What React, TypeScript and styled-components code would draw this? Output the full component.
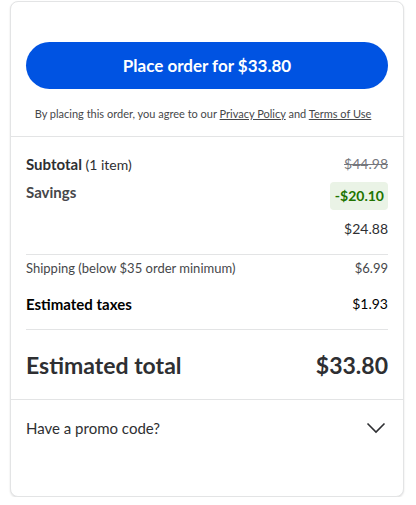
import React from 'react';
import styled, { createGlobalStyle } from 'styled-components';

const GlobalStyle = createGlobalStyle`
  body {
    margin: 0;
    background: #fff;
    font-family: Lato, "Noto Sans", sans-serif;
    color: #2e2f32;
  }
`;

const Page = styled.div`
  padding: 1px 12px 0 10px;
`;

const Card = styled.section`
  box-sizing: border-box;
  width: 394px;
  height: 496px;
  border: 1px solid #e3e4e5;
  border-radius: 8px;
  box-shadow: 0 1px 2px rgba(0, 0, 0, 0.12);
  background: #fff;
  display: flex;
  flex-direction: column;
`;

const CheckoutArea = styled.div`
  padding: 40px 15px 0;
  border-bottom: 1px solid #e3e4e5;
  display: flex;
  flex-direction: column;
  align-items: center;
`;

const PlaceOrderButton = styled.button`
  width: 100%;
  height: 47px;
  border: none;
  border-radius: 24px;
  background: #0053e2;
  color: #fff;
  font-family: Lato, "Noto Sans", sans-serif;
  font-weight: 700;
  font-size: 17px;
  cursor: pointer;
`;

const Legal = styled.p`
  margin: 17px 8px 14px 0;
  font-size: 11px;
  line-height: 16px;
  color: #46474a;

  a {
    color: #46474a;
    text-decoration: underline;
  }
`;

const Summary = styled.div`
  padding: 17px 15px 0;
`;

const Row = styled.div<{ $gap?: number }>`
  display: flex;
  justify-content: space-between;
  align-items: flex-start;
  margin-bottom: ${(p) => p.$gap ?? 0}px;
`;

const Label = styled.span<{ $weight?: number; $size?: number; $color?: string }>`
  font-size: ${(p) => p.$size ?? 15}px;
  line-height: 20px;
  font-weight: ${(p) => p.$weight ?? 400};
  color: ${(p) => p.$color ?? '#2e2f32'};

  small {
    font-size: 14px;
    font-weight: 400;
  }
`;

const Amount = styled.span<{ $size?: number; $color?: string; $struck?: boolean }>`
  font-size: ${(p) => p.$size ?? 14}px;
  line-height: 20px;
  color: ${(p) => p.$color ?? '#2e2f32'};
  text-decoration: ${(p) => (p.$struck ? 'line-through' : 'none')};
`;

const SavingsBadge = styled.span`
  background: #eaf3e6;
  color: #217300;
  font-weight: 700;
  font-size: 14px;
  line-height: 20px;
  padding: 4px 4px 4px 5px;
  border-radius: 4px;
`;

const Divider = styled.hr`
  border: none;
  border-top: 1px solid #e3e4e5;
  margin: 0;
`;

const TotalRow = styled.div`
  display: flex;
  justify-content: space-between;
  align-items: center;
  padding: 22px 0 21px;
  font-size: 23px;
  line-height: 26px;
  font-weight: 700;
  color: #2e2f32;
`;

const PromoToggle = styled.button`
  border: none;
  border-top: 1px solid #e3e4e5;
  background: none;
  display: flex;
  justify-content: space-between;
  align-items: center;
  padding: 19px 17px 21px 15px;
  font-family: Lato, "Noto Sans", sans-serif;
  font-size: 15px;
  color: #2e2f32;
  cursor: pointer;
`;

const Chevron = () => (
  <svg width="20" height="12" viewBox="0 0 20 12" fill="none">
    <path d="M1.5 1.5 L10 10 L18.5 1.5" stroke="#2e2f32" strokeWidth="1.6" />
  </svg>
);

export default function App() {
  return (
    <Page>
      <GlobalStyle />
      <Card>
        <CheckoutArea>
          <PlaceOrderButton>Place order for $33.80</PlaceOrderButton>
          <Legal>
            By placing this order, you agree to our <a href="#">Privacy Policy</a> and{' '}
            <a href="#">Terms of Use</a>
          </Legal>
        </CheckoutArea>
        <Summary>
          <Row $gap={7}>
            <Label $weight={700}>
              Subtotal <small>(1 item)</small>
            </Label>
            <Amount $color="#74767c" $struck>
              $44.98
            </Amount>
          </Row>
          <Row $gap={9}>
            <Label $weight={700} $color="#46474a">
              Savings
            </Label>
            <SavingsBadge>-$20.10</SavingsBadge>
          </Row>
          <Row $gap={15}>
            <span />
            <Amount>$24.88</Amount>
          </Row>
          <Divider />
          <Row $gap={16} style={{ paddingTop: 3 }}>
            <Label $size={13} $color="#46474a">
              Shipping (below $35 order minimum)
            </Label>
            <Amount $size={13} $color="#46474a">
              $6.99
            </Amount>
          </Row>
          <Row $gap={15}>
            <Label $weight={700} $color="#000">
              Estimated taxes
            </Label>
            <Amount $color="#000">$1.93</Amount>
          </Row>
          <Divider />
          <TotalRow>
            <span>Estimated total</span>
            <span>$33.80</span>
          </TotalRow>
        </Summary>
        <PromoToggle>
          <span>Have a promo code?</span>
          <Chevron />
        </PromoToggle>
      </Card>
    </Page>
  );
}
